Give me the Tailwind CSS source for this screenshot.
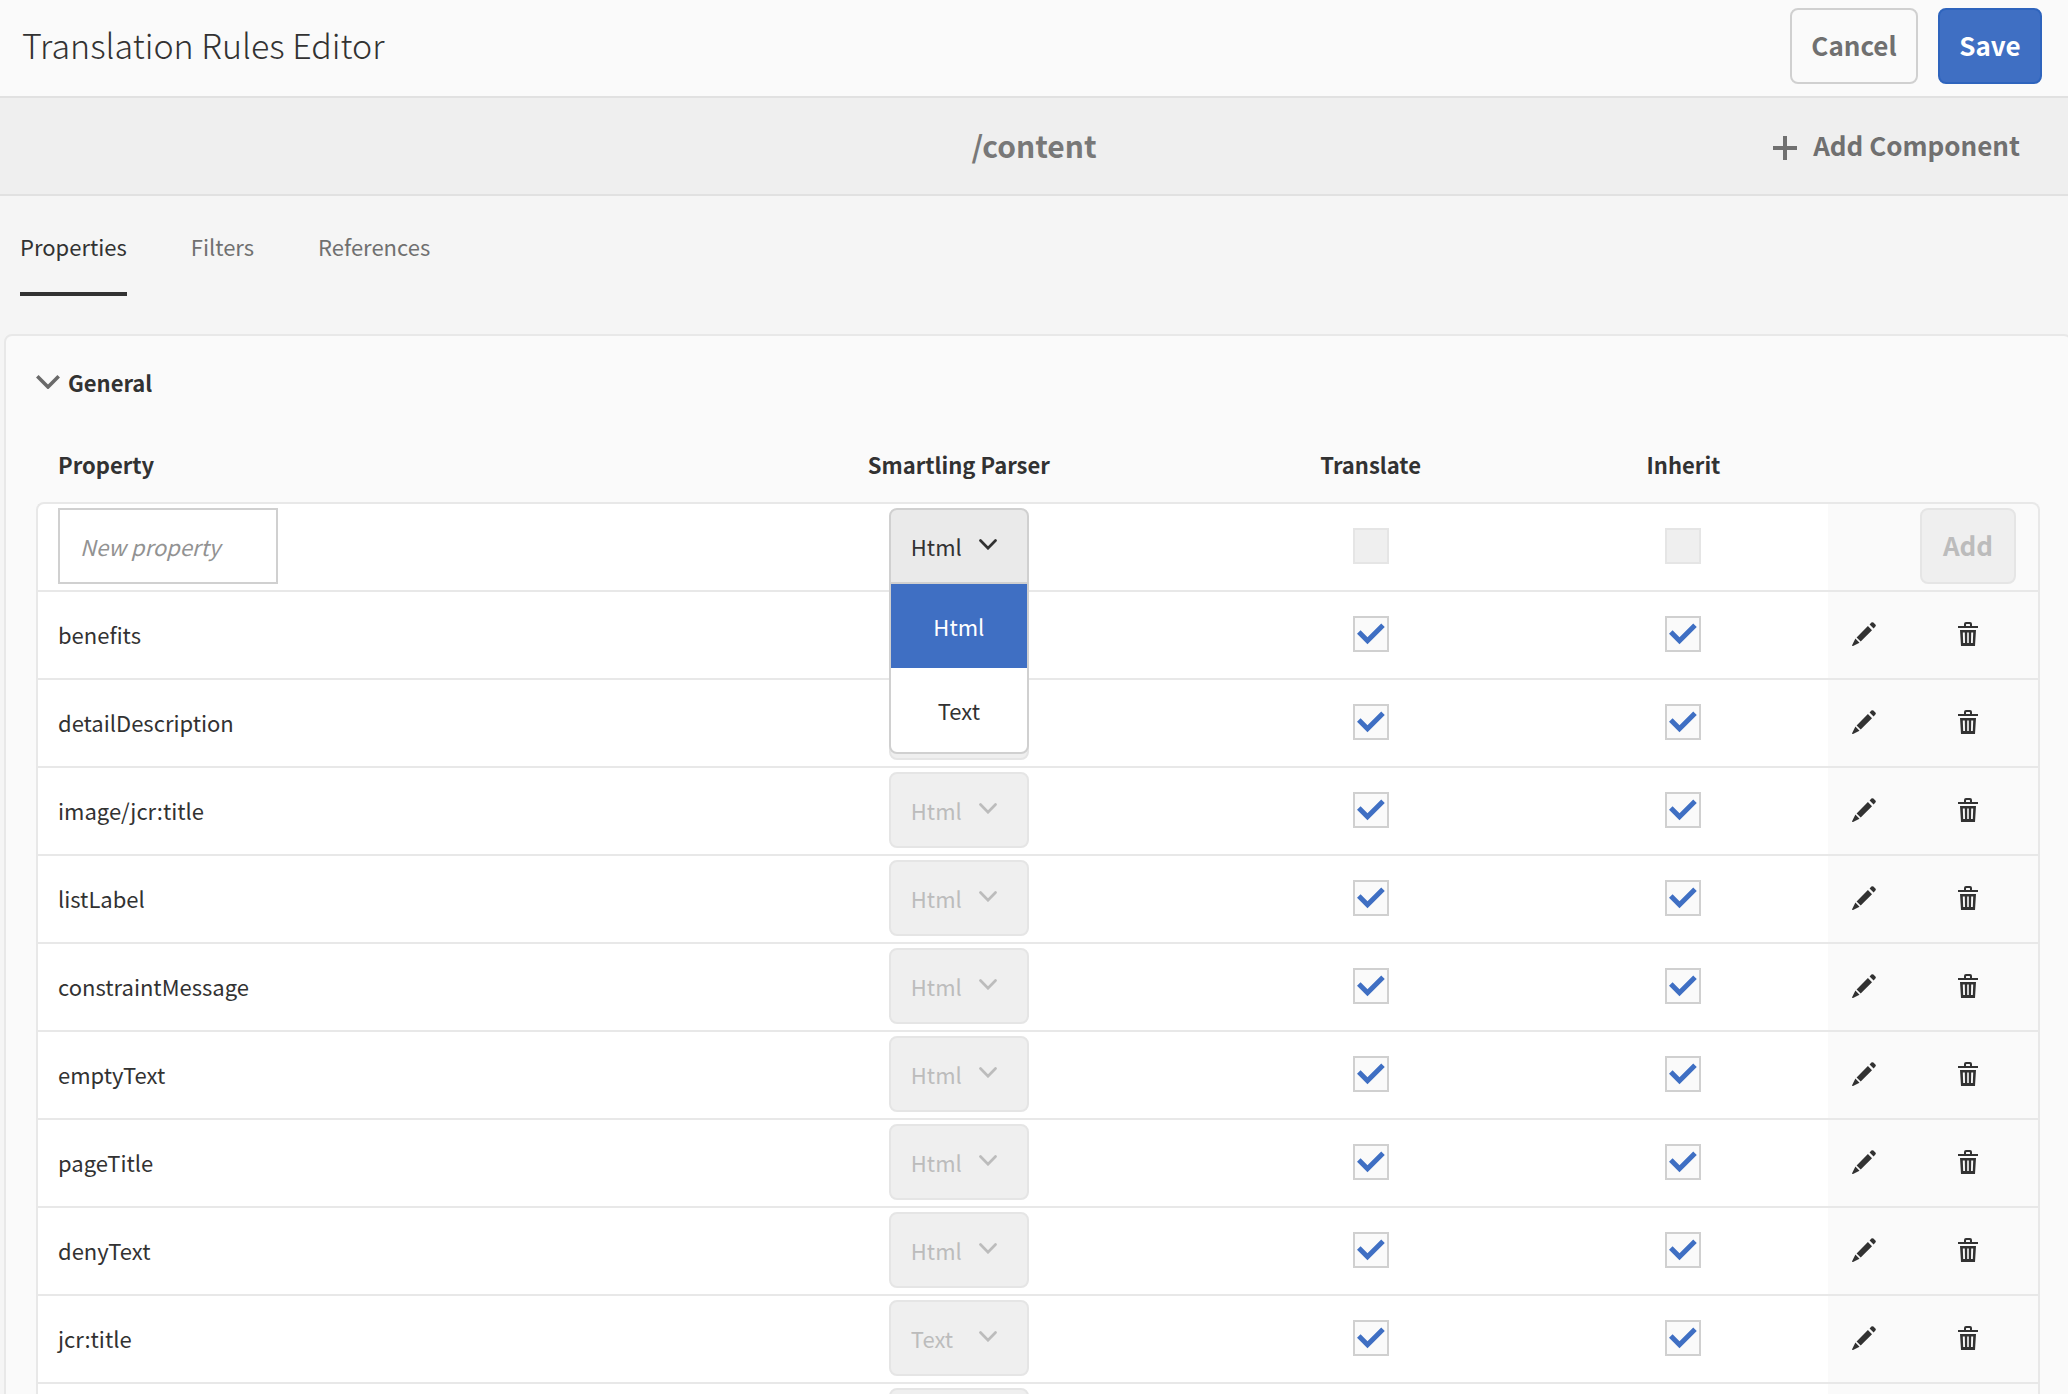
<!DOCTYPE html>
<html lang="en">
<head>
<meta charset="utf-8">
<title>Translation Rules Editor</title>
<script src="https://cdn.jsdelivr.net/npm/@tailwindcss/browser@4"></script>
</head>
<body class="min-h-screen overflow-x-hidden bg-[#f5f5f5] font-['Noto_Sans_CJK_SC','Open_Sans',sans-serif] text-[22px] leading-8 text-[#323232]">
<header class="flex h-[98px] items-center justify-between border-b-2 border-[#e1e1e1] bg-[#fafafa] pr-[26px] pl-[22px] pb-1">
  <h1 class="pb-[2px] text-[34px] leading-12 font-light">Translation Rules Editor</h1>
  <div class="flex gap-5 text-[26px] font-bold">
    <button class="h-[76px] w-32 rounded-lg border-2 border-[#d0d0d0] pb-[2px] text-[#707070]">Cancel</button>
    <button class="h-[76px] w-[104px] rounded-lg border-2 border-[#2e64bd] bg-[#3f6fc3] pb-[2px] text-white">Save</button>
  </div>
</header>
<section class="grid h-[98px] grid-cols-3 items-center border-b-2 border-[#e1e1e1] bg-[#efefef]">
  <h2 class="col-start-2 pb-[2px] text-center text-[30px] font-bold text-[#787878]">/content</h2>
  <button class="mr-12 flex items-center gap-4 justify-self-end text-[26px] font-bold text-[#707070]">
    <svg class="mt-1 size-6" viewBox="0 0 24 24" fill="none" stroke="currentColor" stroke-width="4"><path d="M12 0v24M0 12h24"/></svg>
    <span class="pb-[2px]">Add Component</span>
  </button>
</section>
<nav class="flex gap-16 px-5 pt-[34px] pb-[38px] text-[#707070]">
  <a href="#properties" class="h-[66px] border-b-4 border-[#323232] text-[#323232]" aria-current="page">Properties</a>
  <a href="#filters">Filters</a>
  <a href="#references">References</a>
</nav>
<main id="properties" class="-mr-1 ml-1 rounded-t-lg border-2 border-[#e8e8e8] bg-[#fafafa] px-[30px]">
  <h3><button class="flex items-center gap-2 pt-[30px] font-bold">
    <svg class="h-[14px] w-6" viewBox="0 0 24 14" fill="none" stroke="#6a6a6a" stroke-width="3.6"><path d="M1.3 1.3L12 12L22.7 1.3"/></svg>
    General
  </button></h3>
  <table class="w-full table-fixed border-separate border-spacing-0">
    <colgroup>
      <col class="w-[33.9%]"><col class="w-[24.3%]"><col class="w-[16.8%]"><col><col class="w-[72px]"><col class="w-[140px]">
    </colgroup>
    <thead>
      <tr class="h-[104px] align-middle font-bold">
        <th scope="col" class="pt-7 pl-[22px] text-left">Property</th>
        <th scope="col" class="pt-7">Smartling Parser</th>
        <th scope="col" class="pt-7">Translate</th>
        <th scope="col" class="pt-7">Inherit</th>
        <td colspan="2"></td>
      </tr>
    </thead>
    <tbody id="rules">
      <tr>
        <td class="rounded-tl-lg border-y-2 border-l-2 border-[#e8e8e8] bg-white px-5 pt-1 pb-[6px]">
          <input type="text" aria-label="New property" placeholder="New property" class="block h-[76px] w-[220px] border-2 border-[#d0d0d0] bg-white px-5 placeholder:italic placeholder:text-[#929292]">
        </td>
        <td class="border-y-2 border-[#e8e8e8] bg-white pt-1 pb-[6px]">
          <div class="relative mx-auto w-[140px]">
            <select aria-label="Smartling parser for new property" class="block h-[76px] w-full appearance-none rounded-t-lg border-2 border-[#d0d0d0] bg-[#eaeaea] pl-5"><option>Html</option><option>Text</option></select>
            <svg class="pointer-events-none absolute top-[31px] right-8 h-[11px] w-[18px]" viewBox="0 0 18 11" fill="none" stroke="#323232" stroke-width="2.7" stroke-linecap="round"><path d="M1.5 1.5L9 9.2L16.5 1.5"/></svg>
            <ul role="listbox" aria-label="Parser options" class="absolute inset-x-0 top-[74px] z-10 overflow-hidden rounded-b-lg border-2 border-[#d0d0d0] bg-white text-center leading-[84px]">
              <li role="option" aria-selected="true" class="bg-[#3f6fc3] text-white">Html</li>
              <li role="option" aria-selected="false">Text</li>
            </ul>
          </div>
        </td>
        <td class="border-y-2 border-[#e8e8e8] bg-white pb-[2px]"><input type="checkbox" disabled aria-label="Translate new property" class="mx-auto block size-9 appearance-none border-2 border-[#e5e5e5] bg-[#efefef]"></td>
        <td class="border-y-2 border-[#e8e8e8] bg-white pb-[2px]"><input type="checkbox" disabled aria-label="Inherit new property" class="mx-auto block size-9 appearance-none border-2 border-[#e5e5e5] bg-[#efefef]"></td>
        <td class="border-y-2 border-[#e8e8e8]"></td>
        <td class="rounded-tr-lg border-y-2 border-r-2 border-[#e8e8e8] pt-1 pr-[2px] pb-[6px]">
          <button disabled class="mx-auto block h-[76px] w-24 rounded-lg border-2 border-[#e5e5e5] bg-[#efefef] pb-[2px] text-[26px] font-bold text-[#bcbcbc]">Add</button>
        </td>
      </tr>
    </tbody>
  </table>
</main>
<script>
const rules = [
  ['benefits', 'Html'], ['detailDescription', 'Html'], ['image/jcr:title', 'Html'], ['listLabel', 'Html'],
  ['constraintMessage', 'Html'], ['emptyText', 'Html'], ['pageTitle', 'Html'], ['denyText', 'Html'],
  ['jcr:title', 'Text'], ['', '']
];
const checkbox = label => `
  <td class="border-b-2 border-[#e8e8e8] bg-white pb-[2px]">
    <span class="mx-auto grid size-9">
      <input type="checkbox" checked aria-label="${label}" class="col-start-1 row-start-1 size-9 appearance-none border-2 border-[#d0d0d0] bg-[#fafafa]">
      <svg class="pointer-events-none col-start-1 row-start-1 size-9" viewBox="0 0 36 36" fill="none" stroke="#3f6fc3" stroke-width="5"><path d="M5.8 16L14.5 24.8L30 9.2"/></svg>
    </span>
  </td>`;
document.getElementById('rules').insertAdjacentHTML('beforeend', rules.map(([name, parser]) => `
  <tr class="h-[88px]">
    <td class="border-b-2 border-l-2 border-[#e8e8e8] bg-white pb-[2px] pl-5">${name}</td>
    <td class="border-b-2 border-[#e8e8e8] bg-white pt-1 pb-[6px]">
      <div class="relative mx-auto w-[140px]">
        <select disabled aria-label="Smartling parser for ${name}" class="block h-[76px] w-full appearance-none rounded-lg border-2 border-[#e5e5e5] bg-[#efefef] pl-5 text-[#bcbcbc] opacity-100"><option>${parser}</option></select>
        <svg class="pointer-events-none absolute top-[31px] right-8 h-[11px] w-[18px]" viewBox="0 0 18 11" fill="none" stroke="#bcbcbc" stroke-width="2.7" stroke-linecap="round"><path d="M1.5 1.5L9 9.2L16.5 1.5"/></svg>
      </div>
    </td>
    ${checkbox('Translate ' + name)}
    ${checkbox('Inherit ' + name)}
    <td class="border-b-2 border-[#e8e8e8] pb-[2px]">
      <button aria-label="Edit ${name}" class="mx-auto block">
        <svg class="size-6" viewBox="0 0 24 24" fill="#323232"><path d="M4.6 15.4L15.9 4.1L20 8.2L8.700 19.500ZM17.6 2.400L19.4 .6Q20.400 -.3 21.400 .6L23.400 2.600Q24.300 3.600 23.400 4.600L21.600 6.400ZM3.400 16.600L7.500 20.700L1 23.900Q-.1 24.200 .2 23Z"/></svg>
      </button>
    </td>
    <td class="border-r-2 border-b-2 border-[#e8e8e8] pr-[2px] pb-[2px]">
      <button aria-label="Delete ${name}" class="mx-auto block">
        <svg class="h-6 w-5" viewBox="0 0 20 24" fill="#323232"><path fill-rule="evenodd" d="M0 4H6V2Q6 0 8 0H12Q14 0 14 2V4H20V6H0ZM8 4H12V2.600Q12 2 11.400 2H8.600Q8 2 8 2.600ZM2 8H18L17 24H3ZM4.800 10.400L5.200 21H7L6.800 10.400ZM9.200 10.400V21H10.800V10.400ZM13.200 10.400L13 21H14.800L15.200 10.400Z"/></svg>
      </button>
    </td>
  </tr>`).join(''));
</script>
</body>
</html>
